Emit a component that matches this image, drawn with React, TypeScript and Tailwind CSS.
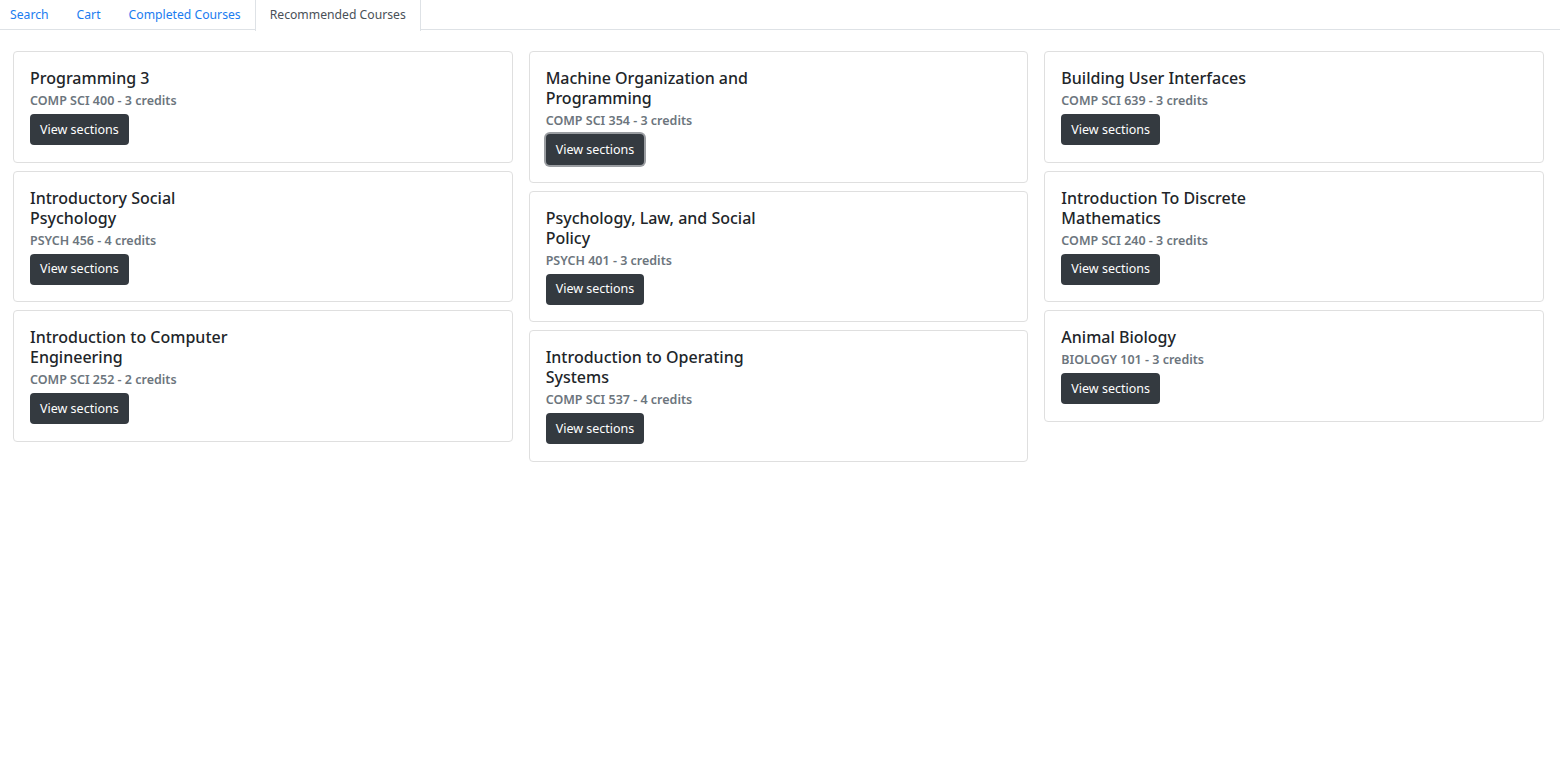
import React from "react";

const courses = [
  [
    { title: "Programming 3", code: "COMP SCI 400 - 3 credits" },
    { title: "Introductory Social Psychology", code: "PSYCH 456 - 4 credits" },
    { title: "Introduction to Computer Engineering", code: "COMP SCI 252 - 2 credits" },
  ],
  [
    { title: "Machine Organization and Programming", code: "COMP SCI 354 - 3 credits", focused: true },
    { title: "Psychology, Law, and Social Policy", code: "PSYCH 401 - 3 credits" },
    { title: "Introduction to Operating Systems", code: "COMP SCI 537 - 4 credits" },
  ],
  [
    { title: "Building User Interfaces", code: "COMP SCI 639 - 3 credits" },
    { title: "Introduction To Discrete Mathematics", code: "COMP SCI 240 - 3 credits" },
    { title: "Animal Biology", code: "BIOLOGY 101 - 3 credits" },
  ],
];

function CourseCard({ title, code, focused }: { title: string; code: string; focused?: boolean }) {
  return (
    <div className="rounded-[4px] border border-[#dfdfdf] bg-white px-4 pt-4 pb-[16.5px]">
      <h5 className="max-w-[225px] text-[16px] font-medium leading-[20px] text-[#212529]">{title}</h5>
      <div className="mt-[3px] mb-[3px] text-[12.5px] font-semibold leading-[20px] text-[#6c757d]">{code}</div>
      <button
        className={
          "h-[31px] rounded-[4px] bg-[#343a40] px-[10px] text-[12.5px] leading-[20px] text-white" +
          (focused ? " ring-2 ring-[#9a9da1]" : "")
        }
      >
        View sections
      </button>
    </div>
  );
}

export default function App() {
  const tabs = ["Search", "Cart", "Completed Courses", "Recommended Courses"];
  return (
    <div className="min-h-screen bg-white font-['Noto_Sans',sans-serif]">
      <nav className="flex h-[30px] border-b border-[#dee2e6]">
        {tabs.map((t, i) => {
          const active = i === 3;
          return (
            <a
              key={t}
              className={
                "flex h-[30px] items-center text-[12.2px] " +
                (i === 0 ? "pl-[10px] pr-[14px] " : "px-[14px] ") +
                (active
                  ? "border-x border-[#dee2e6] bg-white text-[#495057] h-[31px]"
                  : "text-[#1a7cf0]")
              }
            >
              {t}
            </a>
          );
        })}
      </nav>
      <div className="grid grid-cols-3 gap-4 pl-[13px] pr-4 pt-[21px]">
        {courses.map((col, ci) => (
          <div key={ci} className="flex flex-col gap-2">
            {col.map((c) => (
              <CourseCard key={c.title} {...c} />
            ))}
          </div>
        ))}
      </div>
    </div>
  );
}
